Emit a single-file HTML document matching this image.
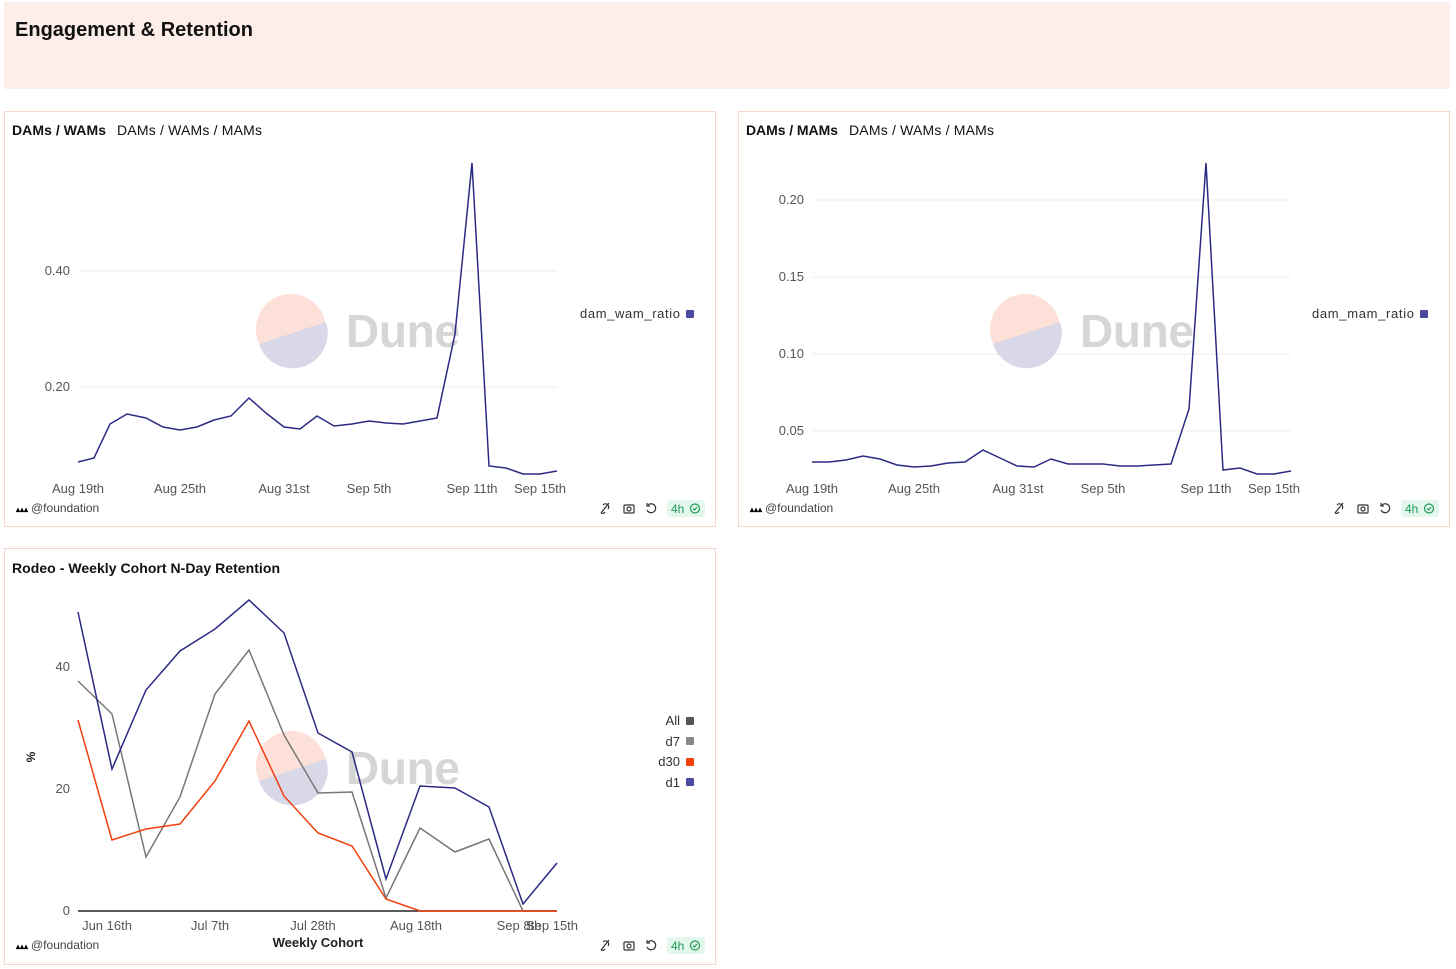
<!DOCTYPE html><html><head><style>
body{margin:0;background:#fff;width:1456px;height:969px;overflow:hidden;font-family:"Liberation Sans",sans-serif}
.p{position:absolute;border:1px solid #f9d6cc;background:#fff}
</style></head><body>
<div style="position:absolute;left:4px;top:2px;width:1446px;height:87px;background:#fdeeea"></div>
<div class="p" style="left:4px;top:111px;width:710px;height:414px"></div>
<div class="p" style="left:738px;top:111px;width:710px;height:414px"></div>
<div class="p" style="left:4px;top:548px;width:710px;height:415px"></div>
<svg width="1456" height="969" style="position:absolute;left:0;top:0" font-family="Liberation Sans, sans-serif">
<text x="15" y="36" font-size="20" font-weight="bold" fill="#111" textLength="238">Engagement &amp; Retention</text>
<defs>
<g id="dune"><circle r="35" fill="#fde0d8"/><path d="M-32,15 L35,-7 A35,35 0 0 1 -32,15Z" fill="#d8d8e8"/></g>
</defs>
<!-- panel 1 -->
<text x="12" y="135" font-size="14" font-weight="bold" fill="#111" textLength="94">DAMs / WAMs</text>
<text x="117" y="135" font-size="14" fill="#111" textLength="145">DAMs / WAMs / MAMs</text>
<g stroke="#eee"><line x1="78" y1="271" x2="557" y2="271"/><line x1="78" y1="387" x2="557" y2="387"/></g>
<g font-size="13" fill="#555"><text x="70" y="275" text-anchor="end">0.40</text><text x="70" y="391" text-anchor="end">0.20</text>
<text x="78" y="493" text-anchor="middle">Aug 19th</text><text x="180" y="493" text-anchor="middle">Aug 25th</text><text x="284" y="493" text-anchor="middle">Aug 31st</text><text x="369" y="493" text-anchor="middle">Sep 5th</text><text x="472" y="493" text-anchor="middle">Sep 11th</text><text x="540" y="493" text-anchor="middle">Sep 15th</text></g>
<use href="#dune" x="291" y="329"/><text x="346" y="347" font-size="46" font-weight="bold" fill="#d6d6d6" textLength="114">Dune</text>
<polyline fill="none" stroke="#2b2a84" stroke-width="1.5" points="78,462 94,458 110,424 127,414 146,418 163,427 180,430 197,427 214,420 231,416 249,398 266,413 284,427 300,429 317,416 334,426 352,424 369,421 386,423 403,424 420,421 437,418 455,334 472,163 489,466 506,468 523,474 540,474 557,471"/>
<text x="680" y="318" font-size="13" fill="#333" text-anchor="end" textLength="100">dam_wam_ratio</text><rect x="686" y="310" width="8" height="8" rx="1" fill="#4a4aa0"/>
<text x="16" y="512" font-size="8" font-weight="bold">▴▴▴</text><text x="31" y="512" font-size="12" fill="#444">@foundation</text>
<!-- panel 2 -->
<text x="746" y="135" font-size="14" font-weight="bold" fill="#111" textLength="92">DAMs / MAMs</text>
<text x="849" y="135" font-size="14" fill="#111" textLength="145">DAMs / WAMs / MAMs</text>
<g stroke="#eee"><line x1="812" y1="200" x2="1291" y2="200"/><line x1="812" y1="277" x2="1291" y2="277"/><line x1="812" y1="354" x2="1291" y2="354"/><line x1="812" y1="431" x2="1291" y2="431"/></g>
<g font-size="13" fill="#555"><text x="804" y="204" text-anchor="end">0.20</text><text x="804" y="281" text-anchor="end">0.15</text><text x="804" y="358" text-anchor="end">0.10</text><text x="804" y="435" text-anchor="end">0.05</text>
<text x="812" y="493" text-anchor="middle">Aug 19th</text><text x="914" y="493" text-anchor="middle">Aug 25th</text><text x="1018" y="493" text-anchor="middle">Aug 31st</text><text x="1103" y="493" text-anchor="middle">Sep 5th</text><text x="1206" y="493" text-anchor="middle">Sep 11th</text><text x="1274" y="493" text-anchor="middle">Sep 15th</text></g>
<use href="#dune" x="1025" y="329"/><text x="1080" y="347" font-size="46" font-weight="bold" fill="#d6d6d6" textLength="114">Dune</text>
<polyline fill="none" stroke="#2b2a84" stroke-width="1.5" points="812,462 829,462 846,460 863,456 880,459 897,465 914,467 931,466 948,463 965,462 983,450 1000,458 1017,466 1034,467 1051,459 1068,464 1086,464 1103,464 1120,466 1137,466 1154,465 1171,464 1189,409 1206,163 1223,470 1240,468 1257,474 1274,474 1291,471"/>
<text x="1414" y="318" font-size="13" fill="#333" text-anchor="end" textLength="102">dam_mam_ratio</text><rect x="1420" y="310" width="8" height="8" rx="1" fill="#4a4aa0"/>
<text x="750" y="512" font-size="8" font-weight="bold">▴▴▴</text><text x="765" y="512" font-size="12" fill="#444">@foundation</text>
<!-- panel 3 -->
<text x="12" y="573" font-size="14" font-weight="bold" fill="#111" textLength="268">Rodeo - Weekly Cohort N-Day Retention</text>
<g font-size="13" fill="#555"><text x="70" y="671" text-anchor="end">40</text><text x="70" y="793" text-anchor="end">20</text><text x="70" y="915" text-anchor="end">0</text>
<text x="107" y="930" text-anchor="middle">Jun 16th</text><text x="210" y="930" text-anchor="middle">Jul 7th</text><text x="313" y="930" text-anchor="middle">Jul 28th</text><text x="416" y="930" text-anchor="middle">Aug 18th</text><text x="519" y="930" text-anchor="middle">Sep 8th</text><text x="552" y="930" text-anchor="middle">Sep 15th</text></g>
<text x="318" y="947" font-size="13" font-weight="bold" fill="#222" text-anchor="middle">Weekly Cohort</text>
<text x="35" y="757" font-size="12" font-weight="bold" fill="#222" transform="rotate(-90 35 757)" text-anchor="middle">%</text>
<use href="#dune" x="291" y="766"/><text x="346" y="784" font-size="46" font-weight="bold" fill="#d6d6d6" textLength="114">Dune</text>
<line x1="78" y1="911" x2="557" y2="911" stroke="#222" stroke-width="1.5"/>
<polyline fill="none" stroke="#777" stroke-width="1.5" points="78,681 112,714 146,857 180,797 215,694 249,650 284,735 318,793 352,792 386,898 420,828 455,852 489,839 523,911 557,911"/>
<polyline fill="none" stroke="#f0400e" stroke-width="1.5" points="78,720 112,840 146,829 180,824 215,781 249,721 284,796 318,833 352,846 386,899 420,911 455,911 489,911 523,911 557,911"/>
<polyline fill="none" stroke="#2b2a84" stroke-width="1.5" points="78,612 112,769 146,690 180,651 215,629 249,600 284,633 318,733 352,752 386,879 420,786 455,788 489,807 523,904 557,863"/>
<g font-size="13" fill="#333" text-anchor="end"><text x="680" y="725">All</text><text x="680" y="746">d7</text><text x="680" y="766">d30</text><text x="680" y="787">d1</text></g>
<rect x="686" y="717" width="8" height="8" rx="1" fill="#555"/><rect x="686" y="737" width="8" height="8" rx="1" fill="#888"/><rect x="686" y="758" width="8" height="8" rx="1" fill="#f0400e"/><rect x="686" y="778" width="8" height="8" rx="1" fill="#4a4aa0"/>
<text x="16" y="949" font-size="8" font-weight="bold">▴▴▴</text><text x="31" y="949" font-size="12" fill="#444">@foundation</text>
<!-- toolbars -->
<g id="tb" fill="none" stroke="#333" stroke-width="1.2">
<path d="M601,513 L609,503 M603,505 a3,3 0 0 1 5,4 M601,513 a3,3 0 0 0 4,-1"/>
<rect x="624" y="505" width="10" height="8" rx="1"/><circle cx="629" cy="509" r="2"/>
<path d="M648,505 a4.5,4.5 0 1 1 -1,5 M647,503 v3 h3"/>
<rect x="667" y="500" width="38" height="17" rx="3" fill="#e3f7ec" stroke="none"/>
<text x="671" y="513" font-size="12" fill="#1f9a55" stroke="none">4h</text>
<circle cx="695" cy="508.5" r="4.5" stroke="#1f9a55"/><path d="M693,508.5 l1.5,1.5 l2.5,-3" stroke="#1f9a55"/>
</g>
<use href="#tb" x="734" y="0"/>
<use href="#tb" x="0" y="437"/>
</svg>
</body></html>
